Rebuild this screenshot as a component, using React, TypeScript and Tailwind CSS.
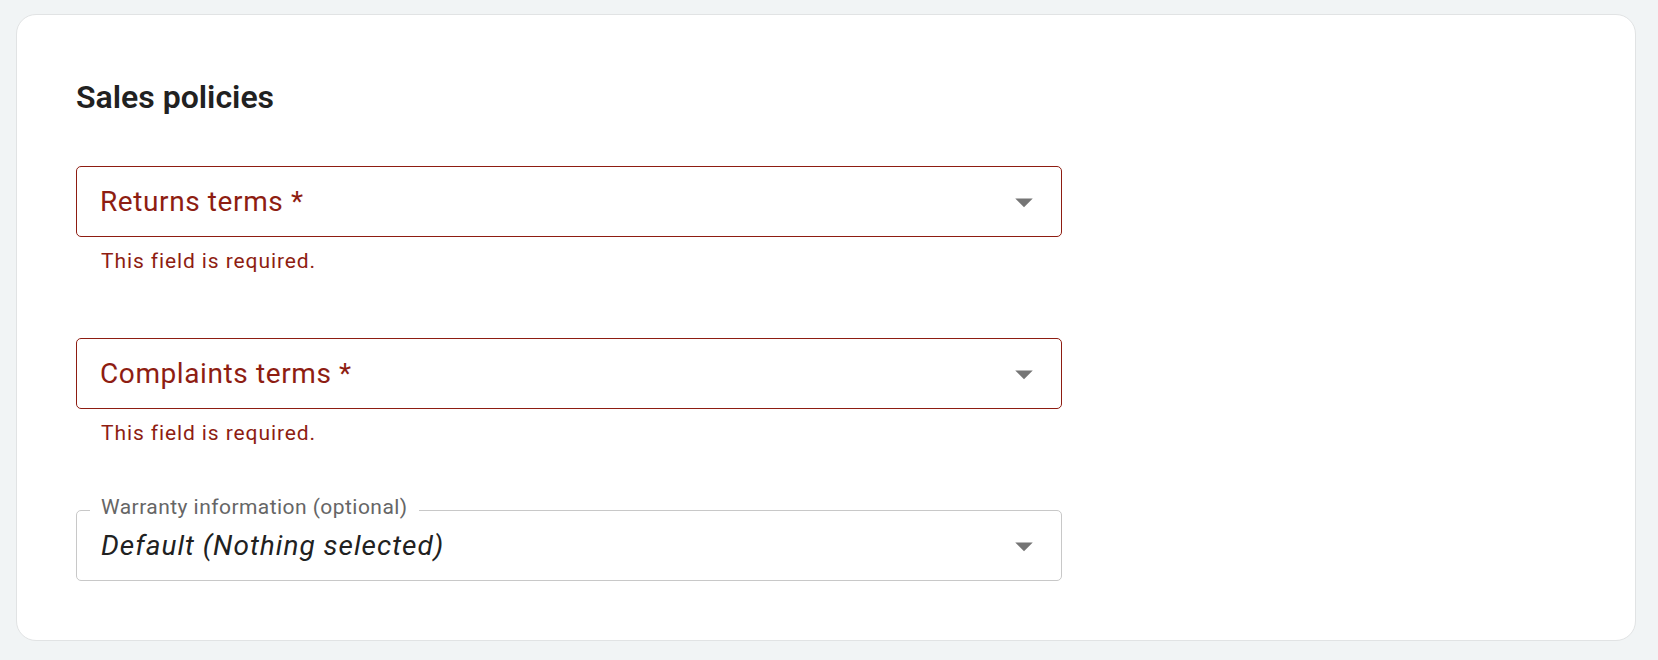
import React from "react";

function ArrowDrop() {
  return (
    <svg viewBox="0 0 24 24" className="h-[42px] w-[42px] shrink-0 fill-[#757575]">
      <path d="M7 10l5 5 5-5z" />
    </svg>
  );
}

interface SelectFieldProps {
  label: string;
  error?: string;
}

/** Campo de seleção com erro: rótulo dentro da caixa, borda vermelha. */
function RequiredSelect({ label, error }: SelectFieldProps) {
  return (
    <div className="flex flex-col">
      <div className="flex h-[71px] w-[986px] items-center rounded-[5px] border border-[#8e1d12] pl-[23px] pr-[16px]">
        <span className="text-[28px] leading-[40px] tracking-[0.6px] text-[#8e1d12]">{label}</span>
        <div className="ml-auto">
          <ArrowDrop />
        </div>
      </div>
      {error && (
        <p className="ml-[25px] mt-[7px] text-[21px] leading-[35px] tracking-[0.9px] text-[#8e1d12]">
          {error}
        </p>
      )}
    </div>
  );
}

function OptionalSelect({ label, value }: { label: string; value: string }) {
  return (
    <div className="relative flex h-[71px] w-[986px] items-center rounded-[5px] border border-[#c8c8c8] pl-[24px] pr-[16px]">
      {/* rótulo "notched" sobre a borda */}
      <span className="absolute -top-[16px] left-[13px] bg-white px-[11px] text-[21px] leading-[24px] tracking-[0.45px] text-[#666666]">
        {label}
      </span>
      <span className="text-[28px] italic leading-[40px] tracking-[1px] text-[#212121]">{value}</span>
      <div className="ml-auto">
        <ArrowDrop />
      </div>
    </div>
  );
}

export default function App() {
  return (
    <div className="min-h-[660px] bg-[#f1f4f5] px-[16px] pt-[14px] font-['Roboto',sans-serif]">
      <section className="h-[627px] w-[1620px] rounded-[20px] border border-[#e1e3e4] bg-white pl-[59px] pt-[64px]">
        <h2 className="text-[32px] font-semibold leading-[36px] text-[#212121]">Sales policies</h2>
        <div className="mt-[51px] flex flex-col gap-[59px]">
          <RequiredSelect label="Returns terms *" error="This field is required." />
          <RequiredSelect label="Complaints terms *" error="This field is required." />
          <OptionalSelect label="Warranty information (optional)" value="Default (Nothing selected)" />
        </div>
      </section>
    </div>
  );
}
